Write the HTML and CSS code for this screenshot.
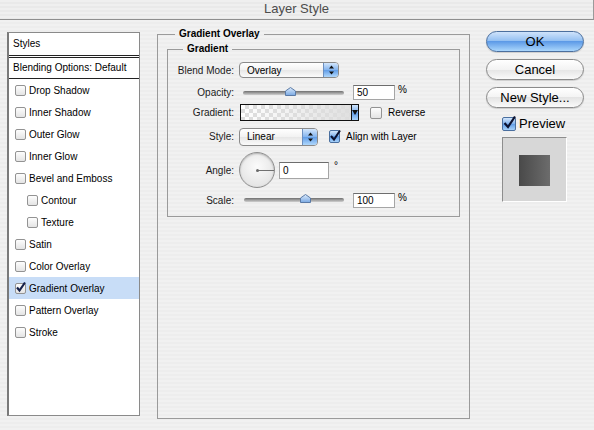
FILE: index.html
```html
<!DOCTYPE html>
<html lang="en">

<head>
  <meta charset="UTF-8">
  <title>Layer Style</title>
  <link rel="stylesheet" href="styles.css">
</head>

<body>

  <div class="window">
    <!-- Title bar -->
    <div class="titlebar">Layer Style</div>

    <div class="dialog">

      <!-- Effect list -->
      <div class="styles-list">
        <div class="list-head">Styles</div>
        <div class="list-blend">Blending Options: Default</div>
        <div class="list-item"><span class="check"></span>Drop Shadow</div>
        <div class="list-item"><span class="check"></span>Inner Shadow</div>
        <div class="list-item"><span class="check"></span>Outer Glow</div>
        <div class="list-item"><span class="check"></span>Inner Glow</div>
        <div class="list-item"><span class="check"></span>Bevel and Emboss</div>
        <div class="list-item sub"><span class="check"></span>Contour</div>
        <div class="list-item sub"><span class="check"></span>Texture</div>
        <div class="list-item"><span class="check"></span>Satin</div>
        <div class="list-item"><span class="check"></span>Color Overlay</div>
        <div class="list-item selected">
          <span class="check">
            <svg width="11" height="11" viewBox="0 0 11 11"><path d="M2 5.5 L4.5 8.5 L10 0.5" fill="none" stroke="#14204a" stroke-width="2.2"/></svg>
          </span>Gradient Overlay
        </div>
        <div class="list-item"><span class="check"></span>Pattern Overlay</div>
        <div class="list-item"><span class="check"></span>Stroke</div>
      </div>

      <!-- Settings -->
      <fieldset class="group">
        <legend>Gradient Overlay</legend>
        <fieldset class="group inner">
          <legend>Gradient</legend>

          <div class="field row-blend">
            <span class="label">Blend Mode:</span>
            <div class="select blend-select">
              <span>Overlay</span>
              <span class="stepper">
                <svg width="7" height="10" viewBox="0 0 7 10"><path d="M3.5 0.5 L6 3.5 H1 Z M3.5 9.5 L6 6.5 H1 Z" fill="#111"/></svg>
              </span>
            </div>
          </div>

          <div class="field row-opacity">
            <span class="label">Opacity:</span>
            <div class="slider">
              <span class="thumb" style="left: 47%">
                <svg width="11" height="9" viewBox="0 0 11 9"><path d="M5.5 0.5 L10.5 4 V8.5 H0.5 V4 Z" fill="url(#thumbFill)" stroke="#5a7aa6"/></svg>
              </span>
            </div>
            <span class="num">50</span>
            <span class="unit">%</span>
          </div>

          <div class="field row-gradient">
            <span class="label">Gradient:</span>
            <div class="gradient-swatch"></div>
            <span class="swatch-arrow">
              <svg width="6" height="5" viewBox="0 0 6 5"><path d="M0 0 H6 L3 5 Z" fill="#111"/></svg>
            </span>
            <span class="check box-check"></span>
            <span class="opt">Reverse</span>
          </div>

          <div class="field row-style">
            <span class="label">Style:</span>
            <div class="select style-select">
              <span>Linear</span>
              <span class="stepper">
                <svg width="7" height="10" viewBox="0 0 7 10"><path d="M3.5 0.5 L6 3.5 H1 Z M3.5 9.5 L6 6.5 H1 Z" fill="#111"/></svg>
              </span>
            </div>
            <span class="check box-check on">
              <svg width="12" height="12" viewBox="0 0 12 12"><path d="M2 6 L5 9.5 L11 0.5" fill="none" stroke="#0c1230" stroke-width="2"/></svg>
            </span>
            <span class="opt">Align with Layer</span>
          </div>

          <div class="field row-angle">
            <span class="label">Angle:</span>
            <div class="dial"></div>
            <span class="num angle-num">0</span>
            <span class="degree">&deg;</span>
          </div>

          <div class="field row-scale">
            <span class="label">Scale:</span>
            <div class="slider scale-slider">
              <span class="thumb" style="left: 61%">
                <svg width="11" height="9" viewBox="0 0 11 9"><path d="M5.5 0.5 L10.5 4 V8.5 H0.5 V4 Z" fill="url(#thumbFill)" stroke="#5a7aa6"/></svg>
              </span>
            </div>
            <span class="num">100</span>
            <span class="unit">%</span>
          </div>
        </fieldset>
      </fieldset>

      <!-- Buttons and preview -->
      <div class="side">
        <div class="btn default">OK</div>
        <div class="btn">Cancel</div>
        <div class="btn">New Style...</div>
        <div class="preview-toggle">
          <span class="check big on">
            <svg width="14" height="14" viewBox="0 0 14 14"><path d="M2.5 7 L6 11 L13 0.5" fill="none" stroke="#0c1230" stroke-width="2.2"/></svg>
          </span>Preview
        </div>
        <div class="preview">
          <div class="preview-square"></div>
        </div>
      </div>

    </div>
  </div>

  <!-- shared gradient for slider thumbs -->
  <svg width="0" height="0" class="defs">
    <defs>
      <linearGradient id="thumbFill" x1="0" y1="0" x2="0" y2="1">
        <stop offset="0" stop-color="#dcebfc"/>
        <stop offset="1" stop-color="#79a8e2"/>
      </linearGradient>
    </defs>
  </svg>

</body>

</html>
```

FILE: styles.css
```css
body {
  margin: 0;
  font-family: "Liberation Sans", Arial, sans-serif;
  font-size: 10px;
  color: #000;
  background: repeating-linear-gradient(#f1f1f1 0 2px, #ededed 2px 4px);
}

.window {
  width: 594px;
  height: 430px;
  overflow: hidden;
}

.titlebar {
  height: 19px;
  line-height: 18px;
  text-align: center;
  font-size: 13px;
  color: #4c4c4c;
  border-bottom: 1px solid #8e8e8e;
  border-right: 1px solid #9a9a9a;
  background: repeating-linear-gradient(#efefef 0 2px, #e9e9e9 2px 4px);
}

.dialog {
  display: flex;
  align-items: flex-start;
}

/* left column with the effect list */
.styles-list {
  box-sizing: border-box;
  width: 133px;
  height: 384px;
  margin: 12px 0 0 7px;
  background: white;
  border: 1px solid #8a8a8a;
  border-left: 2px solid #7a7a7a;
}

.list-head {
  height: 22px;
  line-height: 21px;
  padding-left: 4px;
  border-bottom: 3px double #222;
}

.list-blend {
  height: 20px;
  line-height: 20px;
  padding-left: 4px;
  border-bottom: 1px solid #222;
}

.list-item {
  display: flex;
  align-items: center;
  height: 22px;
  padding-left: 6px;
}

.list-item.sub {
  padding-left: 18px;
}

.list-item.selected {
  background: #c8ddf7;
}

.check {
  box-sizing: border-box;
  display: inline-flex;
  align-items: center;
  justify-content: center;
  width: 11px;
  height: 11px;
  margin-right: 3px;
  border: 1px solid #939393;
  border-radius: 2px;
  background: linear-gradient(#fdfdfd, #e4e4e4);
}

.check svg {
  margin-top: -2px;
  overflow: visible;
}

.check.on {
  border-color: #4a6f9f;
  background: linear-gradient(#d3e6fc, #7fb0ec 50%, #5f9be6 50%, #a7d2fb);
}

/* settings group */
.group {
  box-sizing: border-box;
  width: 313px;
  height: 392px;
  min-width: 0;
  margin: 7px 0 0 17px;
  padding: 0 9px;
  border: 1px solid #9a9a9a;
}

.group legend {
  margin-left: 8px;
  padding: 0 4px;
  line-height: 14px;
  font-weight: bold;
}

.group.inner {
  width: auto;
  height: auto;
  margin: 1px 0 0 0;
  padding: 0 0 9px 0;
}

.group.inner legend {
  margin-left: 15px;
}

.field {
  display: flex;
  align-items: center;
}

.label {
  width: 66px;
  margin-right: 5px;
  text-align: right;
  color: #1a1a1a;
}

.row-blend { height: 16px; margin-top: 6px; }
.row-opacity { height: 15px; margin-top: 7px; }
.row-gradient { height: 17px; margin-top: 4px; }
.row-style { height: 17px; margin-top: 7px; }
.row-angle { height: 36px; margin-top: 7px; }
.row-scale { height: 14px; margin-top: 5px; }

.select {
  box-sizing: border-box;
  display: flex;
  align-items: center;
  justify-content: space-between;
  height: 16px;
  padding-left: 7px;
  border: 1px solid #8a8a8a;
  border-radius: 4px;
  background: linear-gradient(#ffffff, #f2f2f2 50%, #e6e6e6 50%, #fbfbfb);
  overflow: hidden;
}

.blend-select { width: 100px; }

.style-select {
  width: 79px;
  height: 18px;
}

.stepper {
  display: flex;
  align-items: center;
  justify-content: center;
  width: 14px;
  height: 100%;
  border-left: 1px solid #6b8fc0;
  background: linear-gradient(#d3e6fc, #82b3ee 50%, #5f9be6 50%, #b0d8fc);
}

.slider {
  position: relative;
  width: 101px;
  height: 4px;
  margin-left: 4px;
  border-radius: 2px;
  background: linear-gradient(#6f6f6f, #a9a9a9 60%, #d0d0d0);
}

.scale-slider {
  width: 100px;
  margin-left: 5px;
}

.thumb {
  position: absolute;
  top: -4px;
  margin-left: -5px;
  line-height: 0;
}

.num {
  box-sizing: border-box;
  width: 42px;
  height: 15px;
  line-height: 13px;
  margin-left: 9px;
  padding-left: 3px;
  background: white;
  border: 1px solid #a5a5a5;
  border-top-color: #6d6d6d;
}

.unit {
  margin-left: 3px;
  align-self: flex-start;
  margin-top: -1px;
}

.gradient-swatch {
  box-sizing: border-box;
  width: 111px;
  height: 17px;
  margin-left: 1px;
  border: 1px solid #111;
  border-right: none;
  background:
    linear-gradient(to right, rgba(255, 255, 255, 0.3), rgba(222, 222, 222, 0.95)),
    conic-gradient(#cfcfcf 25%, #ffffff 0 50%, #cfcfcf 0 75%, #ffffff 0) 0 0 / 8px 8px;
}

.swatch-arrow {
  box-sizing: border-box;
  display: flex;
  align-items: center;
  justify-content: center;
  width: 8px;
  height: 17px;
  border: 1px solid #111;
  background: linear-gradient(#cfe4fb, #7aaeed 50%, #5c98e4 50%, #a9d3fb);
}

.box-check {
  width: 12px;
  height: 12px;
  margin-left: 11px;
  margin-right: 0;
}

.row-style .box-check {
  width: 11px;
  height: 13px;
}

.opt {
  margin-left: 6px;
}

.dial {
  position: relative;
  box-sizing: border-box;
  width: 36px;
  height: 36px;
  border: 1px solid #8e8e8e;
  border-radius: 50%;
  background: radial-gradient(circle at 50% 40%, #fbfbfb, #e6e6e6 70%, #d8d8d8);
  box-shadow: inset 0 1px 2px rgba(0, 0, 0, 0.25);
}

/* angle indicator line and centre dot */
.dial::before {
  content: "";
  position: absolute;
  top: 50%;
  left: 50%;
  width: 50%;
  height: 1px;
  background: #707070;
}

.dial::after {
  content: "";
  position: absolute;
  top: 50%;
  left: 50%;
  width: 3px;
  height: 3px;
  margin: -1px 0 0 -1px;
  border-radius: 50%;
  background: #6a6a6a;
}

.angle-num {
  width: 50px;
  height: 17px;
  line-height: 15px;
  margin-left: 4px;
}

.degree {
  margin-left: 5px;
  align-self: flex-start;
  margin-top: 8px;
}

/* right column */
.side {
  width: 98px;
  margin: 11px 0 0 16px;
}

.btn {
  box-sizing: border-box;
  height: 21px;
  line-height: 19px;
  margin-bottom: 7px;
  text-align: center;
  font-size: 13px;
  border: 1px solid #8a8a8a;
  border-radius: 11px;
  background: linear-gradient(#ffffff, #f3f3f3 50%, #e4e4e4 50%, #fafafa);
  box-shadow: 0 1px 1px rgba(0, 0, 0, 0.15);
}

.btn.default {
  border-color: #4b6f9e;
  background: linear-gradient(#cfe3fb, #8fbdf1 50%, #5d9ae7 50%, #aad6fc);
}

.preview-toggle {
  display: flex;
  align-items: center;
  margin: 9px 0 0 16px;
  font-size: 13px;
  line-height: 14px;
}

.check.big {
  width: 14px;
  height: 14px;
  margin-right: 3px;
}

.preview {
  box-sizing: border-box;
  width: 65px;
  height: 65px;
  margin: 6px 0 0 16px;
  padding: 17px 0 0 16px;
  background: #d7d7d7;
  border: 1px solid #fff;
  border-top-color: #8d8d8d;
  border-left-color: #8d8d8d;
}

.preview-square {
  width: 31px;
  height: 31px;
  background: linear-gradient(to right, #494949, #6c6c6c);
}

.defs {
  position: absolute;
}
```
